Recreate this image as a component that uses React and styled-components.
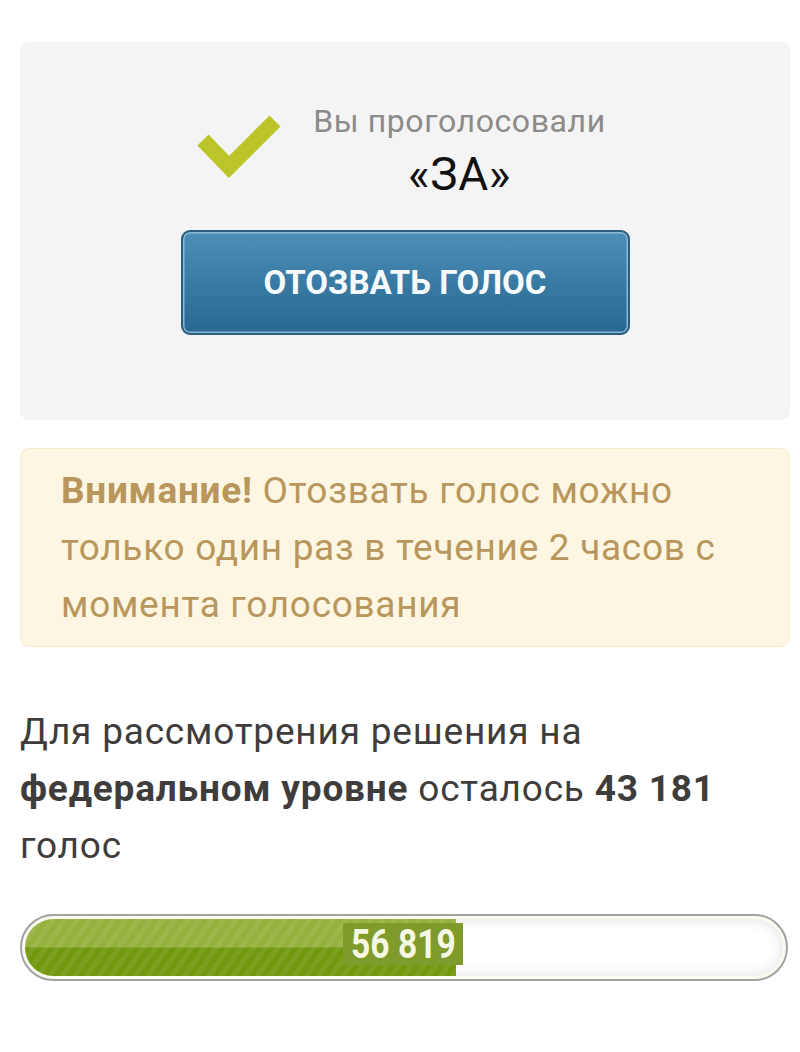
import React from "react";
import styled, { createGlobalStyle } from "styled-components";

const Global = createGlobalStyle`
  html, body { margin: 0; padding: 0; background: #ffffff; }
  body { font-family: Roboto, "Noto Sans", "Liberation Sans", sans-serif; }
`;

const Page = styled.div`
  padding: 42px 10px 40px 20px;
  display: flex;
  flex-direction: column;
`;

const VotedCard = styled.section`
  background: #f4f4f4;
  border-radius: 9px;
  height: 378px;
  box-sizing: border-box;
  padding-top: 58px;
  display: flex;
  flex-direction: column;
  align-items: center;
`;

const VotedRow = styled.div`
  display: flex;
  align-items: flex-start;
  gap: 33px;
  margin-left: -8px;
`;

const Check = styled.svg`
  width: 84px;
  height: 64px;
  margin-top: 15px;
  flex: none;
  overflow: visible;
`;

const VotedText = styled.div`
  display: flex;
  flex-direction: column;
  align-items: center;
`;

const VotedLabel = styled.div`
  font-size: 32px;
  letter-spacing: 0.6px;
  line-height: 42px;
  color: #8b8b8b;
`;

const VotedValue = styled.div`
  font-size: 46px;
  letter-spacing: 0.6px;
  line-height: 52px;
  color: #111111;
  margin-top: 6px;
`;

const RevokeButton = styled.button`
  margin-top: 30px;
  width: 449px;
  height: 105px;
  box-sizing: border-box;
  border: 2px solid #2b5e80;
  border-radius: 9px;
  background: linear-gradient(#4b8fb9, #286790);
  box-shadow: inset 0 0 0 1.5px #8ab7d4;
  color: #f7fbfd;
  font-family: Roboto, "Liberation Sans", sans-serif;
  font-weight: 700;
  font-size: 33px;
  cursor: pointer;
`;

const Warning = styled.div`
  margin-top: 28px;
  background: #fcf6e2;
  border: 1.5px solid #f6ebcb;
  border-radius: 9px;
  padding: 13px 24px 13px 40px;
  font-size: 37px;
  letter-spacing: 0.7px;
  line-height: 57px;
  color: #b9975c;
`;

const Strong = styled.b`
  font-weight: 700;
`;

const Remaining = styled.p`
  margin: 56px 0 0 0;
  font-size: 37px;
  letter-spacing: 0.8px;
  line-height: 57px;
  color: #3f3d3c;
`;

const Bar = styled.div`
  margin-top: 40px;
  width: 768px;
  height: 67px;
  box-sizing: border-box;
  border: 2px solid #a2a2a2;
  border-radius: 34px;
  padding: 3px;
  background: #fbfbf2;
  position: relative;
`;

const Track = styled.div`
  height: 100%;
  border-radius: 30px;
  background: #ffffff;
  box-shadow: inset 0 0 14px rgba(0, 0, 0, 0.12);
  overflow: hidden;
  display: flex;
`;

const Fill = styled.div`
  height: 100%;
  background:
    repeating-linear-gradient(
      -55deg,
      rgba(255, 255, 255, 0.07) 0 5px,
      rgba(0, 0, 0, 0) 5px 10px
    ),
    linear-gradient(#96b23e 0 48%, #72980f 52% 100%);
`;

const Count = styled.div`
  position: absolute;
  top: 7px;
  height: 42px;
  width: 120px;
  background: #7f9b2c;
  display: flex;
  align-items: center;
  justify-content: center;
`;

const CountText = styled.span`
  font-family: Roboto, "Liberation Sans", sans-serif;
  font-weight: 700;
  font-size: 40px;
  color: #f6f8e4;
  transform: scaleX(0.84);
  white-space: nowrap;
`;

export default function App() {
  const votes = 56819;
  const total = 100000;
  const pct = (votes / total) * 100;
  return (
    <>
      <Global />
      <Page>
        <VotedCard>
          <VotedRow>
            <Check viewBox="0 0 84 64">
              <path
                d="M7 25 L33 52 L79 6"
                fill="none"
                stroke="#bbc529"
                strokeWidth="15.5"
                strokeLinejoin="miter"
              />
            </Check>
            <VotedText>
              <VotedLabel>Вы проголосовали</VotedLabel>
              <VotedValue>«ЗА»</VotedValue>
            </VotedText>
          </VotedRow>
          <RevokeButton>ОТОЗВАТЬ ГОЛОС</RevokeButton>
        </VotedCard>
        <Warning>
          <Strong>Внимание!</Strong> Отозвать голос можно только один раз в
          течение 2 часов с момента голосования
        </Warning>
        <Remaining>
          Для рассмотрения решения на <Strong>федеральном уровне</Strong>{" "}
          осталось <Strong>43 181</Strong> голос
        </Remaining>
        <Bar>
          <Track>
            <Fill style={{ width: `${pct}%` }} />
          </Track>
          <Count style={{ left: `calc(${pct}% - 113px)` }}>
            <CountText>56 819</CountText>
          </Count>
        </Bar>
      </Page>
    </>
  );
}
